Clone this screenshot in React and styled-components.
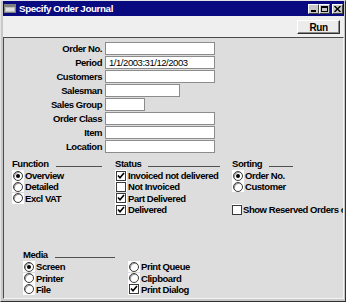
import React from 'react'
import styled, { createGlobalStyle } from 'styled-components'

const GlobalStyle = createGlobalStyle`
  body {
    margin: 0;
    background: #ffffff;
  }
  * {
    box-sizing: border-box;
  }
`

const uiFont = `"Liberation Sans", Arial, sans-serif`

const Window = styled.div`
  width: 346px;
  height: 302px;
  display: flex;
  flex-direction: column;
  background: #c8c8c8;
  border: 1px solid;
  border-color: #e4e4e4 #303030 #303030 #e4e4e4;
  padding: 0 1px 2px 2px;
  font-family: ${uiFont};
  font-size: 9.5px;
  letter-spacing: -0.45px;
  color: #000;
`

const TitleBar = styled.div`
  height: 15px;
  display: flex;
  align-items: center;
  gap: 3px;
  padding: 0 1px;
  background: #0a0a80;
  color: #fff;
  font-weight: bold;
  font-size: 9.8px;
  letter-spacing: -0.4px;
`

const Title = styled.span`
  flex: 1;
  white-space: nowrap;
`

const CaptionButtons = styled.div`
  display: flex;
  align-items: center;
`

const CaptionButton = styled.div`
  width: 11px;
  height: 10px;
  margin-left: ${(p) => (p.$gap ? '2px' : '0')};
  display: flex;
  align-items: center;
  justify-content: center;
  background: #c8c8c8;
  border: 1px solid;
  border-color: #ffffff #404040 #404040 #ffffff;
`

const Toolbar = styled.div`
  height: 21px;
  display: flex;
  justify-content: flex-end;
  align-items: flex-start;
  padding: 4px 4px 0 0;
  background: #efefef;
`

const RunButton = styled.div`
  width: 43px;
  height: 14px;
  display: flex;
  align-items: center;
  justify-content: center;
  background: #ececec;
  border: 1px solid;
  border-color: #ffffff #303030 #303030 #ffffff;
  box-shadow: inset -1px -1px 0 #8a8a8a;
  font-weight: bold;
  font-size: 10px;
`

const Panel = styled.div`
  flex: 1;
  overflow: hidden;
  background: #dddddd;
  border: 1px solid;
  border-color: #4a4a4a #f4f4f4 #f4f4f4 #4a4a4a;
  padding-top: 4px;
`

const FieldGrid = styled.div`
  display: grid;
  grid-template-columns: 98px auto;
  column-gap: 3px;
  row-gap: 1px;
  align-items: center;
`

const FieldLabel = styled.label`
  text-align: right;
  font-weight: bold;
  white-space: nowrap;
`

const FieldInput = styled.input`
  width: ${(p) => p.$width}px;
  height: 13px;
  margin: 0;
  padding: 0 3px;
  border: 1px solid #8c8c8c;
  background: #fff;
  font-family: ${uiFont};
  font-size: 9.5px;
  letter-spacing: -0.45px;
  color: #000;
  outline: none;
`

const Sections = styled.div`
  display: grid;
  grid-template-columns: 103px 117px 1fr;
  margin-top: 5px;
  padding-left: 8px;
`

const Group = styled.div`
  display: flex;
  flex-direction: column;
  min-width: 0;
`

const GroupHeader = styled.div`
  width: ${(p) => p.$width}px;
  height: 12px;
  display: flex;
  align-items: baseline;
  font-weight: bold;
  white-space: nowrap;
  line-height: 12px;
`

const HeaderLine = styled.span`
  flex: 1;
  height: 1px;
  margin-left: 7px;
  background: #505050;
`

const Item = styled.div`
  height: 11.3px;
  display: flex;
  align-items: center;
  font-weight: bold;
  white-space: nowrap;
`

const Spacer = styled.div`
  height: 11.3px;
`

const IconBox = styled.span`
  width: 12px;
  height: 11px;
  margin-right: 1px;
  display: flex;
  align-items: center;
  justify-content: center;
  background: #fff;
`

const Circle = styled.span`
  width: 10px;
  height: 10px;
  border-radius: 50%;
  border: 1px solid #3a3a3a;
  box-shadow: inset 1px 1px 0 #9a9a9a;
  background: #fff;
  display: flex;
  align-items: center;
  justify-content: center;
`

const Dot = styled.span`
  width: 4px;
  height: 4px;
  border-radius: 50%;
  background: #000;
`

const Box = styled.span`
  width: 10px;
  height: 10px;
  border: 1px solid #3a3a3a;
  background: #fff;
  display: flex;
  align-items: center;
  justify-content: center;
`

const MediaGroup = styled.div`
  margin-top: 34px;
  padding-left: 19px;
`

const MediaGrid = styled.div`
  display: grid;
  grid-template-columns: 105px auto;
`

const Radio = ({ checked, children }) => (
  <Item>
    <IconBox>
      <Circle>{checked && <Dot />}</Circle>
    </IconBox>
    {children}
  </Item>
)

const Check = ({ checked, children }) => (
  <Item>
    <IconBox>
      <Box>
        {checked && (
          <svg width="8" height="8" viewBox="0 0 8 8">
            <path d="M1 3.5 L3 5.8 L7 1" fill="none" stroke="#000" strokeWidth="1.6" />
          </svg>
        )}
      </Box>
    </IconBox>
    {children}
  </Item>
)

const WindowIcon = () => (
  <svg width="12" height="9" viewBox="0 0 12 9">
    <rect x="0.5" y="0.5" width="11" height="8" fill="#c0c0c0" stroke="#808080" />
    <rect x="1" y="1" width="10" height="2" fill="#808080" />
    <rect x="2" y="4" width="8" height="3" fill="#e0e0e0" />
  </svg>
)

const fields = [
  { label: 'Order No.', width: 110 },
  { label: 'Period', width: 110, value: '1/1/2003:31/12/2003' },
  { label: 'Customers', width: 110 },
  { label: 'Salesman', width: 75 },
  { label: 'Sales Group', width: 40 },
  { label: 'Order Class', width: 110 },
  { label: 'Item', width: 110 },
  { label: 'Location', width: 110 },
]

const App = () => {
  return (
    <>
      <GlobalStyle />
      <Window>
        <TitleBar>
          <WindowIcon />
          <Title>Specify Order Journal</Title>
          <CaptionButtons>
            <CaptionButton>
              <svg width="7" height="6" viewBox="0 0 7 6">
                <rect x="1" y="4" width="5" height="2" fill="#000" />
              </svg>
            </CaptionButton>
            <CaptionButton>
              <svg width="7" height="6" viewBox="0 0 7 6">
                <rect x="0.5" y="0.5" width="6" height="5" fill="none" stroke="#000" />
                <rect x="0" y="0" width="7" height="2" fill="#000" />
              </svg>
            </CaptionButton>
            <CaptionButton $gap>
              <svg width="7" height="6" viewBox="0 0 7 6">
                <path d="M0.5 0 L6.5 6 M6.5 0 L0.5 6" stroke="#000" strokeWidth="1.4" />
              </svg>
            </CaptionButton>
          </CaptionButtons>
        </TitleBar>

        <Toolbar>
          <RunButton>Run</RunButton>
        </Toolbar>

        <Panel>
          <FieldGrid>
            {fields.map((f) => (
              <React.Fragment key={f.label}>
                <FieldLabel>{f.label}</FieldLabel>
                <FieldInput $width={f.width} readOnly value={f.value || ''} />
              </React.Fragment>
            ))}
          </FieldGrid>

          <Sections>
            <Group>
              <GroupHeader $width={90}>
                Function<HeaderLine />
              </GroupHeader>
              <Radio checked>Overview</Radio>
              <Radio>Detailed</Radio>
              <Radio>Excl VAT</Radio>
            </Group>
            <Group>
              <GroupHeader $width={105}>
                Status<HeaderLine />
              </GroupHeader>
              <Check checked>Invoiced not delivered</Check>
              <Check>Not Invoiced</Check>
              <Check checked>Part Delivered</Check>
              <Check checked>Delivered</Check>
            </Group>
            <Group>
              <GroupHeader $width={61}>
                Sorting<HeaderLine />
              </GroupHeader>
              <Radio checked>Order No.</Radio>
              <Radio>Customer</Radio>
              <Spacer />
              <Check>Show Reserved Orders only</Check>
            </Group>
          </Sections>

          <MediaGroup>
            <GroupHeader $width={92}>
              Media<HeaderLine />
            </GroupHeader>
            <MediaGrid>
              <Radio checked>Screen</Radio>
              <Radio>Print Queue</Radio>
              <Radio>Printer</Radio>
              <Radio>Clipboard</Radio>
              <Radio>File</Radio>
              <Check checked>Print Dialog</Check>
            </MediaGrid>
          </MediaGroup>
        </Panel>
      </Window>
    </>
  )
}

export default App
